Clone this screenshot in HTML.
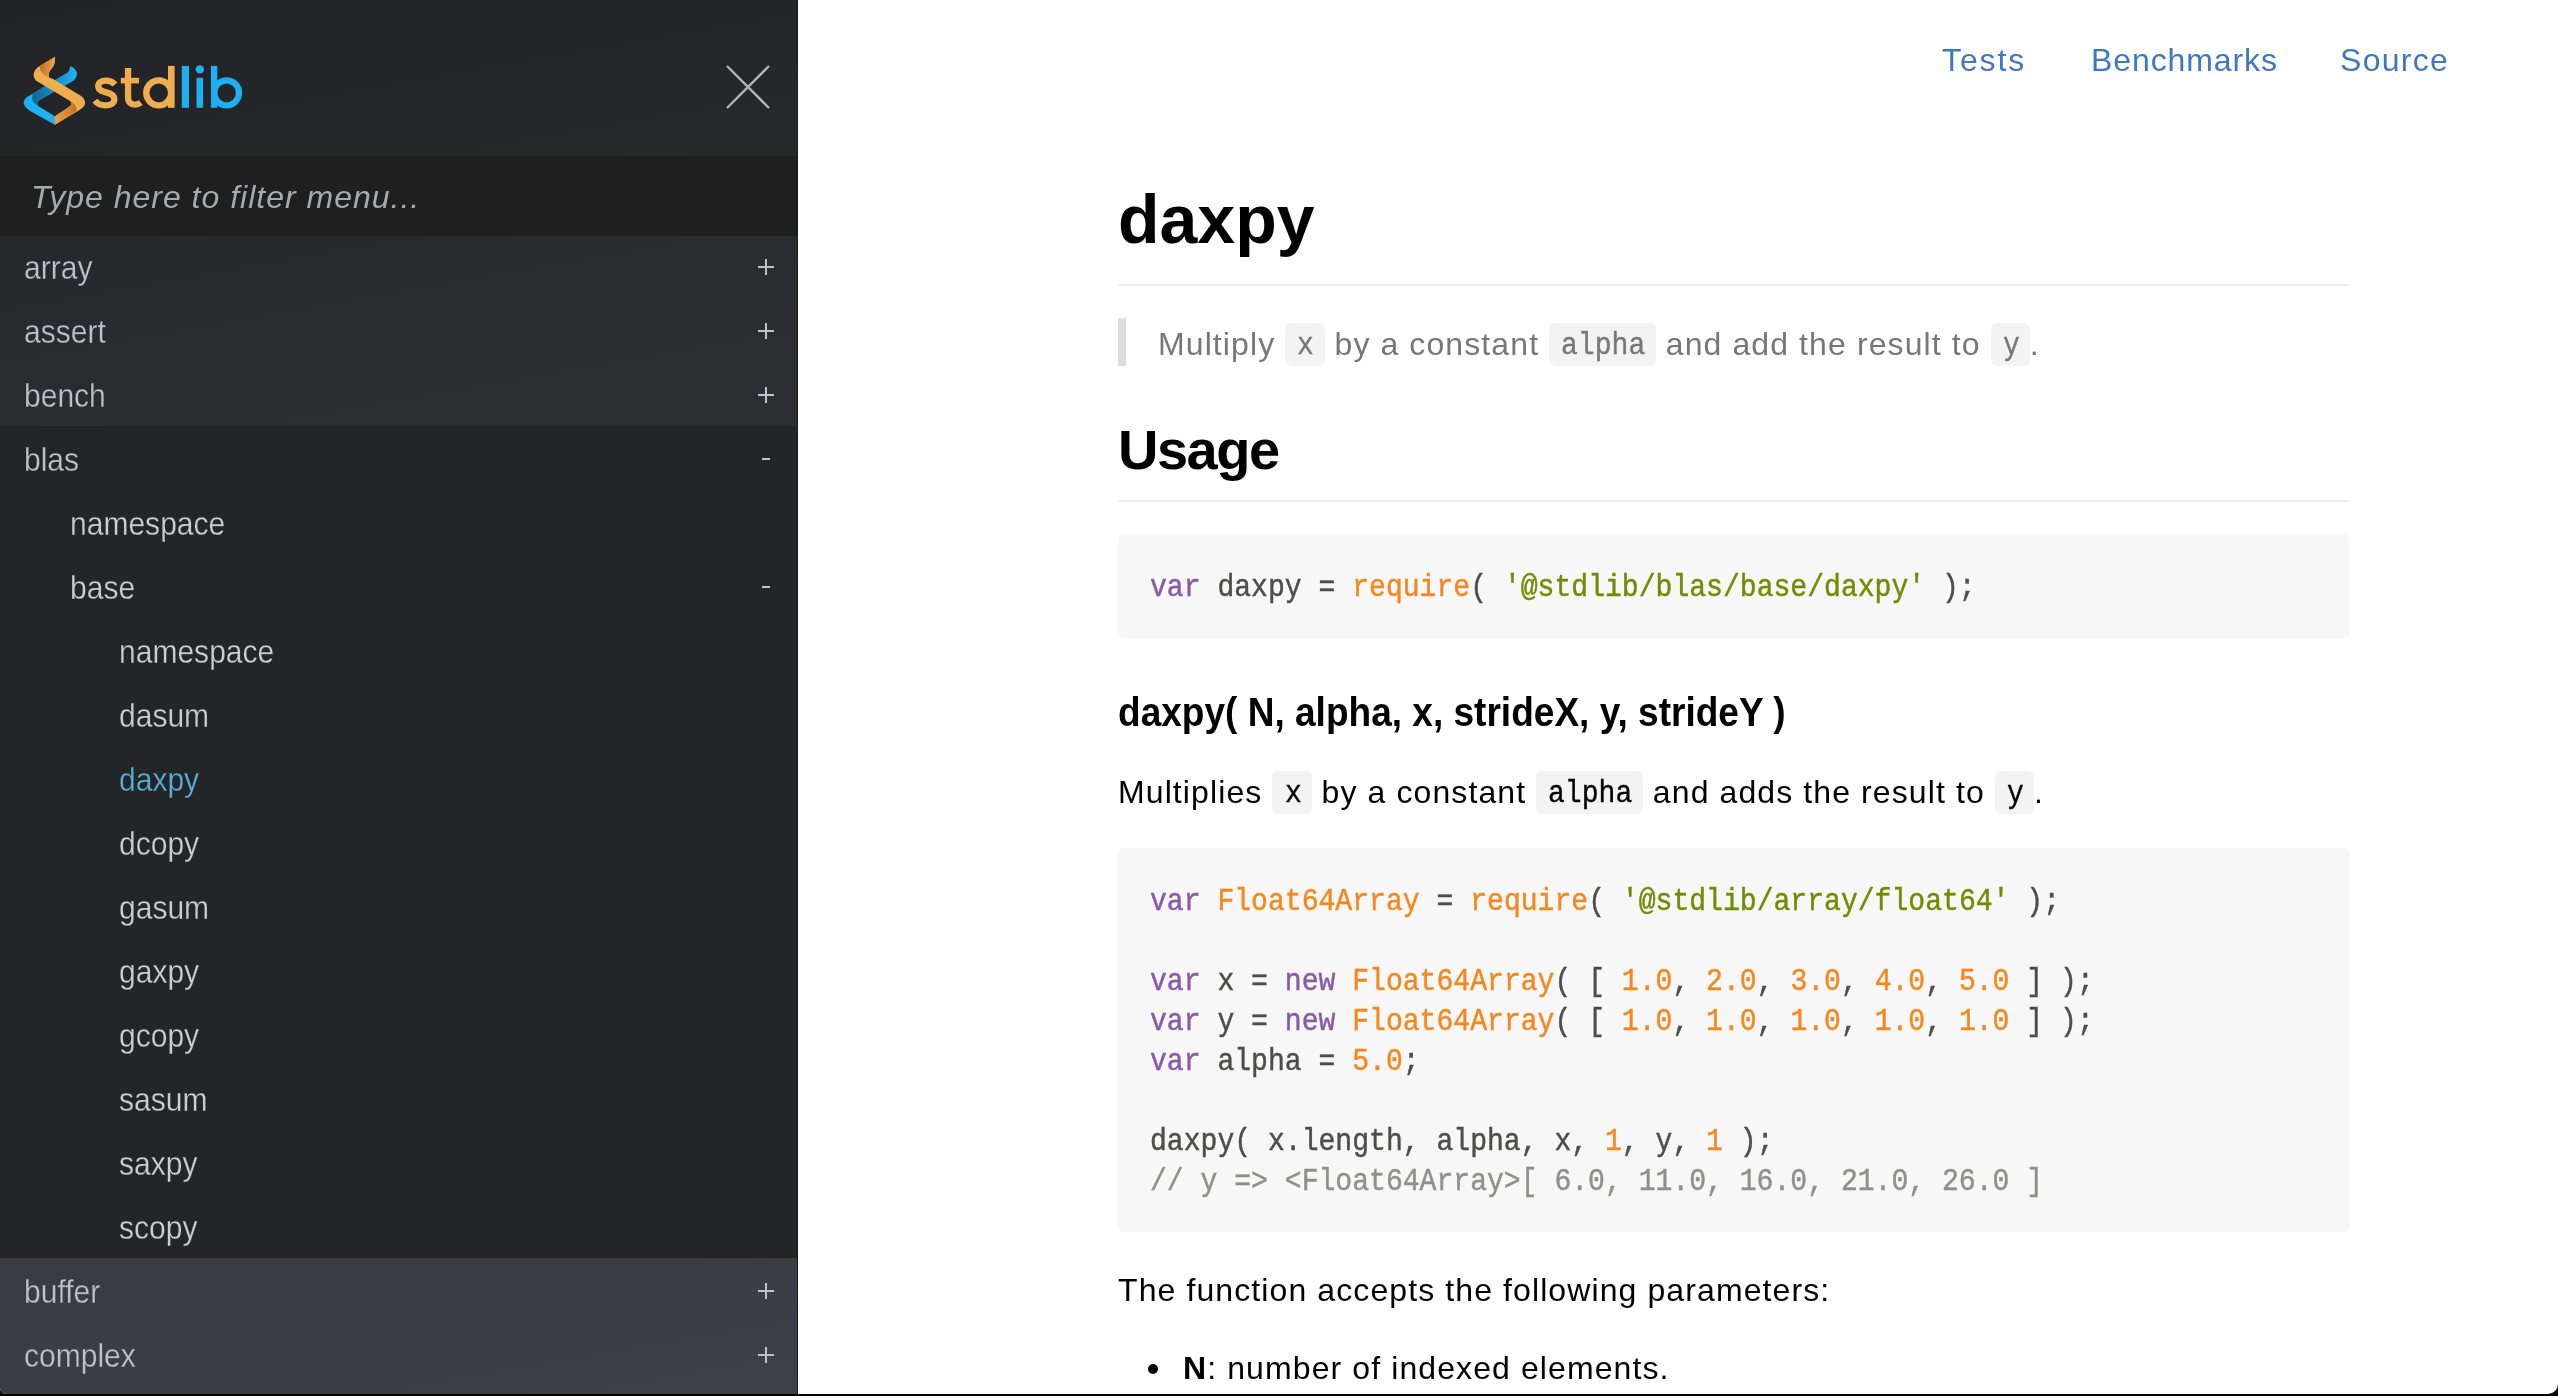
<!DOCTYPE html>
<html><head><meta charset="utf-8">
<style>
html,body{margin:0;padding:0;}
body{width:2558px;height:1396px;overflow:hidden;background:#000;position:relative;font-family:"Liberation Sans",sans-serif;}
#win{position:absolute;left:0;top:0;width:2558px;height:1394px;background:#fff;overflow:hidden;border-radius:0 0 10px 6px;will-change:transform;}
#side{position:absolute;left:0;top:0;width:798px;height:1394px;background:linear-gradient(170deg,#202225 0%,#2b2d31 30%,#3d4045 100%);}
#side .edge{position:absolute;right:0;top:0;width:1px;height:100%;background:#1a1b1c;z-index:5;}
#logo{position:absolute;left:20px;top:52px;}
#logotext{position:absolute;left:0;top:0;}
#close{position:absolute;left:726px;top:65px;}
#filter{position:absolute;left:0;top:156px;width:797px;height:80px;background:#1f1f1f;}
#filter span{position:absolute;left:31px;top:21px;font-style:italic;font-size:32px;color:#a6a9ad;line-height:40px;letter-spacing:1px;}
.row{position:absolute;left:0;width:797px;height:64px;color:#bec1c5;font-size:33px;letter-spacing:0;}
.row span{position:absolute;top:14px;line-height:40px;-webkit-text-stroke:0.3px #2a2c30;transform:scaleX(0.91);transform-origin:0 0;white-space:nowrap;}
#sub ~ .row span{-webkit-text-stroke-color:#242528;}
#sub ~ .row.lo span{-webkit-text-stroke-color:#3a3d42;}
.row .pm{position:absolute;left:757px;top:0;width:18px;height:64px;}
#sub{position:absolute;left:0;top:426px;width:797px;height:832px;background:#242527;}
#main{position:absolute;left:798px;top:0;width:1760px;height:1394px;background:#fff;}
.nav{position:absolute;top:40px;font-size:32px;color:#4078c0;line-height:40px;letter-spacing:1.3px;}
.md{position:absolute;left:1118px;color:#000;}
.code{font-family:"Liberation Mono",monospace;}
.ic i{font-style:normal;display:inline-block;position:relative;top:-1px;left:1px;font-size:31px;line-height:28px;transform:scaleX(0.9058);transform-origin:0 0;-webkit-text-stroke:0.35px currentColor;}
.ic{font-family:"Liberation Mono",monospace;background:#f3f3f3;border-radius:6px;padding:9.2px 11.2px 2.8px;font-size:28px;letter-spacing:0;}
pre{margin:0;}
.h1{font-size:68px;font-weight:bold;line-height:80px;}
.h2{font-size:56px;font-weight:bold;line-height:64px;letter-spacing:-1.5px;}
.h3{font-size:40px;font-weight:bold;line-height:50px;letter-spacing:0;transform:scaleX(0.926);transform-origin:0 0;white-space:nowrap;}
.p{font-size:32px;line-height:44px;letter-spacing:1.1px;}
.gray{color:#777;}
.hr{position:absolute;left:1118px;width:1232px;height:2px;background:#eee;}
.bq{position:absolute;left:1118px;width:8px;height:48px;background:#ddd;}
.pre{position:absolute;left:1118px;width:1232px;background:#f7f7f7;border-radius:6px;box-sizing:border-box;padding:34px 32px 30px;}
.pre pre{font-family:"Liberation Mono",monospace;font-size:31px;line-height:40px;color:#4d4d4c;-webkit-text-stroke:0.45px currentColor;transform:scaleX(0.9058);transform-origin:0 0;}
.bullet{position:absolute;left:1148px;width:10px;height:10px;border-radius:50%;background:#000;}

.kw{color:#8959a8;}
.fn{color:#f5871f;}
.str{color:#718c00;}
.num{color:#f5871f;}
.cm{color:#8e908c;}
</style></head><body>
<div id="win">
<div id="side">
  <div class="edge"></div>
  <svg id="logo" width="70" height="76" viewBox="0 0 1286 1396">
    <defs>
      <linearGradient id="og" x1="0" y1="0" x2="1" y2="0"><stop offset="0" stop-color="#c07020"/><stop offset="1" stop-color="#eea84a"/></linearGradient>
      <linearGradient id="og2" x1="0" y1="0" x2="1" y2="0"><stop offset="0" stop-color="#eba448"/><stop offset="1" stop-color="#c27321"/></linearGradient>
      <linearGradient id="bg2" gradientUnits="userSpaceOnUse" x1="620" y1="0" x2="1000" y2="0"><stop offset="0" stop-color="#1588c2"/><stop offset="1" stop-color="#1eb0f0"/></linearGradient>
      <linearGradient id="bg" x1="0" y1="0" x2="1" y2="0"><stop offset="0" stop-color="#0e6590"/><stop offset="1" stop-color="#1ba2e0"/></linearGradient>
    </defs>
    <path fill="#1eb0f0" d="M923,261 C970,280 1045,330 1042,400 C1040,460 1010,500 983,522 L360,882 C310,912 312,965 335,990 L640,1180 L640,1337 L218,1102 C90,1030 60,960 70,914 C80,860 120,830 163,809 L845,400 C890,375 916,345 923,261 Z"/>
    <path fill="url(#bg2)" d="M923,261 C970,280 1045,330 1042,400 C1040,460 1010,500 983,522 L817,621 L635,514 L845,400 C890,375 916,345 923,261 Z"/>
    <path fill="url(#bg)" d="M450,628 L635,514 L817,621 L360,882 C310,912 312,965 335,990 C290,970 230,930 222,851 C222,800 235,770 247,759 Z"/>
    <path fill="#f0ad4e" d="M643,87 L377,247 C260,310 210,420 289,522 L905,891 C955,920 950,965 929,985 C880,1030 720,1130 640,1185 L640,1337 L1080,1075 C1160,1010 1195,990 1195,930 C1195,870 1160,830 1100,795 L639,513 C580,480 529,470 529,454 C529,400 535,360 560,330 C620,270 650,200 643,87 Z"/>
    <path fill="url(#og)" d="M643,92 C650,200 620,270 560,330 C535,360 529,400 529,454 C470,440 400,400 369,311 C365,280 370,260 377,247 Z"/>
    <path fill="url(#og2)" d="M640,1337 L640,1185 C720,1130 880,1030 929,985 C950,965 955,920 905,891 C1000,940 1050,1000 1035,1090 Z"/>
  </svg>
  <svg id="logotext" width="260" height="140" viewBox="0 0 260 140" style="position:absolute;left:0;top:0">
    <g fill="none" stroke="#f0ad4e" stroke-width="6.3">
      <path d="M115,84.5 C112.5,81.6 109.5,80.6 106,80.6 C101,80.6 98.2,83 98.2,86.3 C98.2,90.3 102.5,91.4 106.3,92.4 C111,93.6 114.4,95.2 114.4,99.2 C114.4,103.2 110.5,105.35 105.5,105.35 C100.8,105.35 97.2,103.6 94.8,100.6"/>
      <path d="M128.05,68 L128.05,97.5 C128.05,102.3 130.8,104.7 134.8,104.7 C137.3,104.7 139.3,103.8 140.8,102.6"/>
      <circle cx="158.7" cy="92.85" r="12.45"/>
    </g>
    <g fill="#f0ad4e">
      <rect x="120.8" y="77.8" width="18.2" height="5.6"/>
      <rect x="168" y="65.9" width="6.6" height="41.9"/>
    </g>
    <g fill="#1eb0f0">
      <rect x="181.8" y="65.9" width="7.2" height="41.9"/>
      <rect x="196.5" y="77.8" width="6.6" height="30"/>
      <circle cx="199.8" cy="69.4" r="4.2"/>
      <rect x="210.9" y="65.9" width="6.4" height="41.9"/>
    </g>
    <circle cx="226.6" cy="92.85" r="12.45" fill="none" stroke="#1eb0f0" stroke-width="6.3"/>
  </svg>
  <svg id="close" width="44" height="44" viewBox="0 0 44 44"><path d="M1,1 L43,43 M43,1 L1,43" stroke="#b3b6b9" stroke-width="2.3"/></svg>
  <div id="filter"><span>Type here to filter menu...</span></div>
  <div class="row" style="top:234px"><span style="left:24px">array</span><svg class="pm" viewBox="0 0 18 64"><path d="M1,33 H17 M9,25 V41" stroke="#bfc2c6" stroke-width="2"/></svg></div>
  <div class="row" style="top:298px"><span style="left:24px">assert</span><svg class="pm" viewBox="0 0 18 64"><path d="M1,33 H17 M9,25 V41" stroke="#bfc2c6" stroke-width="2"/></svg></div>
  <div class="row" style="top:362px"><span style="left:24px">bench</span><svg class="pm" viewBox="0 0 18 64"><path d="M1,33 H17 M9,25 V41" stroke="#bfc2c6" stroke-width="2"/></svg></div>
  <div id="sub"></div>
  <div class="row" style="top:426px"><span style="left:24px">blas</span><svg class="pm" viewBox="0 0 18 64"><path d="M5,33 H13" stroke="#bfc2c6" stroke-width="2"/></svg></div>
  <div class="row" style="top:490px"><span style="left:70px;color:#cecece">namespace</span></div>
  <div class="row" style="top:554px"><span style="left:70px;color:#cecece">base</span><svg class="pm" viewBox="0 0 18 64"><path d="M5,33 H13" stroke="#bfc2c6" stroke-width="2"/></svg></div>
  <div class="row" style="top:618px"><span style="left:119px;color:#cecece">namespace</span></div>
  <div class="row" style="top:682px"><span style="left:119px;color:#cecece">dasum</span></div>
  <div class="row" style="top:746px"><span style="left:119px;color:#58aed8">daxpy</span></div>
  <div class="row" style="top:810px"><span style="left:119px;color:#cecece">dcopy</span></div>
  <div class="row" style="top:874px"><span style="left:119px;color:#cecece">gasum</span></div>
  <div class="row" style="top:938px"><span style="left:119px;color:#cecece">gaxpy</span></div>
  <div class="row" style="top:1002px"><span style="left:119px;color:#cecece">gcopy</span></div>
  <div class="row" style="top:1066px"><span style="left:119px;color:#cecece">sasum</span></div>
  <div class="row" style="top:1130px"><span style="left:119px;color:#cecece">saxpy</span></div>
  <div class="row" style="top:1194px"><span style="left:119px;color:#cecece">scopy</span></div>
  <div class="row lo" style="top:1258px"><span style="left:24px">buffer</span><svg class="pm" viewBox="0 0 18 64"><path d="M1,33 H17 M9,25 V41" stroke="#bfc2c6" stroke-width="2"/></svg></div>
  <div class="row lo" style="top:1322px"><span style="left:24px">complex</span><svg class="pm" viewBox="0 0 18 64"><path d="M1,33 H17 M9,25 V41" stroke="#bfc2c6" stroke-width="2"/></svg></div>
</div>
<!-- MAIN -->
<div class="nav" style="left:1942px;letter-spacing:1.9px">Tests</div>
<div class="nav" style="left:2091px;letter-spacing:0.9px">Benchmarks</div>
<div class="nav" style="left:2340px">Source</div>
<div class="md h1" style="top:179px">daxpy</div>
<div class="hr" style="top:284px"></div>
<div class="bq" style="top:318px"></div>
<div class="md p gray" style="top:322px;left:1158px">Multiply <span class="ic"><i style="margin-right:-1.75px">x</i></span> by a constant <span class="ic"><i style="margin-right:-8.76px">alpha</i></span> and add the result to <span class="ic"><i style="margin-right:-1.75px">y</i></span>.</div>
<div class="md h2" style="top:418px">Usage</div>
<div class="hr" style="top:500px"></div>
<div class="pre" style="top:534px;height:104px"><pre><span class="kw">var</span> daxpy = <span class="fn">require</span>( <span class="str">'@stdlib/blas/base/daxpy'</span> );</pre></div>
<div class="md h3" style="top:687px">daxpy( N, alpha, x, strideX, y, strideY )</div>
<div class="md p" style="top:770px">Multiplies <span class="ic"><i style="margin-right:-1.75px">x</i></span> by a constant <span class="ic"><i style="margin-right:-8.76px">alpha</i></span> and adds the result to <span class="ic"><i style="margin-right:-1.75px">y</i></span>.</div>
<div class="pre" style="top:848px;height:384px"><pre><span class="kw">var</span> <span class="fn">Float64Array</span> = <span class="fn">require</span>( <span class="str">'@stdlib/array/float64'</span> );

<span class="kw">var</span> x = <span class="kw">new</span> <span class="fn">Float64Array</span>( [ <span class="num">1.0</span>, <span class="num">2.0</span>, <span class="num">3.0</span>, <span class="num">4.0</span>, <span class="num">5.0</span> ] );
<span class="kw">var</span> y = <span class="kw">new</span> <span class="fn">Float64Array</span>( [ <span class="num">1.0</span>, <span class="num">1.0</span>, <span class="num">1.0</span>, <span class="num">1.0</span>, <span class="num">1.0</span> ] );
<span class="kw">var</span> alpha = <span class="num">5.0</span>;

daxpy( x.length, alpha, x, <span class="num">1</span>, y, <span class="num">1</span> );
<span class="cm">// y =&gt; &lt;Float64Array&gt;[ 6.0, 11.0, 16.0, 21.0, 26.0 ]</span></pre></div>
<div class="md p" style="top:1268px">The function accepts the following parameters:</div>
<div class="bullet" style="top:1364px"></div>
<div class="md p" style="top:1346px;left:1183px"><b>N</b>: number of indexed elements.</div>
</div>
</body></html>
